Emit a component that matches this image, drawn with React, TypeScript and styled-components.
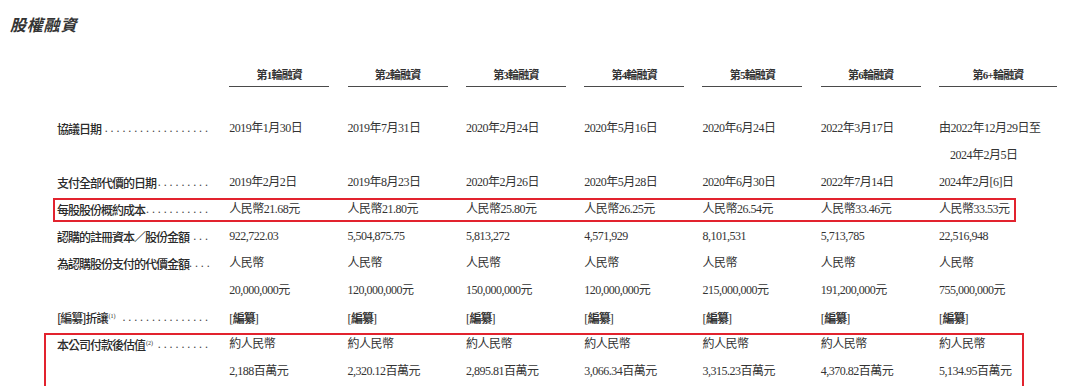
import React from 'react';
import styled, { createGlobalStyle } from 'styled-components';

const SERIF = `"Liberation Serif", "Noto Sans CJK TC", serif`;
const SANS = `"Noto Sans CJK TC", "Noto Sans", sans-serif`;

const Global = createGlobalStyle`
  html, body { margin: 0; padding: 0; background: #fff; }
  body { width: 1080px; height: 386px; overflow: hidden; }
`;

const Page = styled.div`
  padding-top: 14px;
  color: #2b2b2b;
`;

const Title = styled.h2`
  margin: 0 0 0 10px;
  font: italic 700 16px/20px ${SANS};
  letter-spacing: 0.8px;
  color: #333;
`;

const Grid = styled.div`
  display: grid;
  width: max-content;
  grid-template-columns: 154px repeat(6, 100px) 118px;
  column-gap: 18.3px;
  padding-left: 57px;
`;

const HeaderRow = styled(Grid)`
  margin-top: 34px;
`;

const HeadCell = styled.div<{ $col: number }>`
  grid-column: ${(p) => p.$col};
  text-align: center;
  font: 700 11px/14px ${SERIF};
  letter-spacing: -0.8px;
  padding-bottom: 4px;
  border-bottom: 1px solid #4a4a4a;
  color: #333;
`;

const Body = styled.div`
  margin-top: 27.5px;
`;

type Box = { t: number; r: number; b: number; l: number };

const Row = styled(Grid)<{ $box?: Box }>`
  position: relative;
  ${(p) =>
    p.$box
      ? `&::after {
      content: '';
      position: absolute;
      top: ${p.$box.t}px;
      right: ${p.$box.r}px;
      bottom: ${p.$box.b}px;
      left: ${p.$box.l}px;
      border: 2px solid #e2232e;
      pointer-events: none;
    }`
      : ''}
`;

const LabelCell = styled.div`
  display: flex;
  align-items: center;
  justify-content: space-between;
  height: 27px;
  padding-right: 3px;
`;

const LabelText = styled.span`
  font: 500 12px/27px ${SANS};
  letter-spacing: -1px;
  white-space: nowrap;
  color: #2a2a2a;
`;

const Leader = styled.span`
  white-space: nowrap;
  font: 400 12px/27px ${SERIF};
  letter-spacing: 2.9px;
  margin-right: -2.9px;
  color: #444;
`;

const Sup = styled.sup`
  font: 400 6px/1 ${SERIF};
  vertical-align: 5px;
  letter-spacing: 0;
  margin-left: 1px;
`;

const Cell = styled.div`
  display: flex;
  flex-direction: column;
`;

const Line = styled.div<{ $indent?: number }>`
  height: 27px;
  padding-left: ${(p) => p.$indent ?? 0}px;
  font: 400 12px/27px ${SERIF};
  letter-spacing: -0.5px;
  white-space: nowrap;
  color: #333;
`;

const Strong = styled.b`
  font-weight: 700;
  font-family: ${SANS};
  letter-spacing: -1px;
`;

const Redacted = () => (
  <>
    [<Strong>編纂</Strong>]
  </>
);

const heads = ['第1輪融資', '第2輪融資', '第3輪融資', '第4輪融資', '第5輪融資', '第6輪融資', '第6+輪融資'];

type RowData = {
  label: React.ReactNode;
  dots: number;
  cells: React.ReactNode[][];
  box?: Box;
  indentLast?: number;
};

const red = <Redacted />;

const rows: RowData[] = [
  {
    label: '協議日期',
    dots: 18,
    cells: [
      ['2019年1月30日'],
      ['2019年7月31日'],
      ['2020年2月24日'],
      ['2020年5月16日'],
      ['2020年6月24日'],
      ['2022年3月17日'],
      ['由2022年12月29日至', '2024年2月5日'],
    ],
    indentLast: 11,
  },
  {
    label: '支付全部代價的日期',
    dots: 9,
    cells: [
      ['2019年2月2日'],
      ['2019年8月23日'],
      ['2020年2月26日'],
      ['2020年5月28日'],
      ['2020年6月30日'],
      ['2022年7月14日'],
      ['2024年2月[6]日'],
    ],
  },
  {
    label: '每股股份概約成本',
    dots: 11,
    cells: [
      ['人民幣21.68元'],
      ['人民幣21.80元'],
      ['人民幣25.80元'],
      ['人民幣26.25元'],
      ['人民幣26.54元'],
      ['人民幣33.46元'],
      ['人民幣33.53元'],
    ],
    box: { t: 2, r: 41, b: 1, l: 53 },
  },
  {
    label: '認購的註冊資本／股份金額',
    dots: 3,
    cells: [
      ['922,722.03'],
      ['5,504,875.75'],
      ['5,813,272'],
      ['4,571,929'],
      ['8,101,531'],
      ['5,713,785'],
      ['22,516,948'],
    ],
  },
  {
    label: '為認購股份支付的代價金額',
    dots: 4,
    cells: [
      ['人民幣', '20,000,000元'],
      ['人民幣', '120,000,000元'],
      ['人民幣', '150,000,000元'],
      ['人民幣', '120,000,000元'],
      ['人民幣', '215,000,000元'],
      ['人民幣', '191,200,000元'],
      ['人民幣', '755,000,000元'],
    ],
  },
  {
    label: (
      <>
        [編纂]折讓<Sup>(1)</Sup>
      </>
    ),
    dots: 15,
    cells: [[red], [red], [red], [red], [red], [red], [red]],
  },
  {
    label: (
      <>
        本公司付款後估值<Sup>(2)</Sup>
      </>
    ),
    dots: 9,
    cells: [
      ['約人民幣', '2,188百萬元'],
      ['約人民幣', '2,320.12百萬元'],
      ['約人民幣', '2,895.81百萬元'],
      ['約人民幣', '3,066.34百萬元'],
      ['約人民幣', '3,315.23百萬元'],
      ['約人民幣', '4,370.82百萬元'],
      ['約人民幣', '5,134.95百萬元'],
    ],
    box: { t: 2, r: 33, b: -20, l: 44 },
  },
];

export default function App() {
  return (
    <Page>
      <Global />
      <Title>股權融資</Title>
      <HeaderRow>
        {heads.map((h, i) => (
          <HeadCell key={h} $col={i + 2}>
            {h}
          </HeadCell>
        ))}
      </HeaderRow>
      <Body>
        {rows.map((r, ri) => (
          <Row key={ri} $box={r.box}>
            <LabelCell>
              <LabelText>{r.label}</LabelText>
              <Leader>{'.'.repeat(r.dots)}</Leader>
            </LabelCell>
            {r.cells.map((lines, ci) => (
              <Cell key={ci}>
                {lines.map((l, li) => (
                  <Line key={li} $indent={ci === 6 && li > 0 ? r.indentLast : 0}>
                    {l}
                  </Line>
                ))}
              </Cell>
            ))}
          </Row>
        ))}
      </Body>
    </Page>
  );
}
